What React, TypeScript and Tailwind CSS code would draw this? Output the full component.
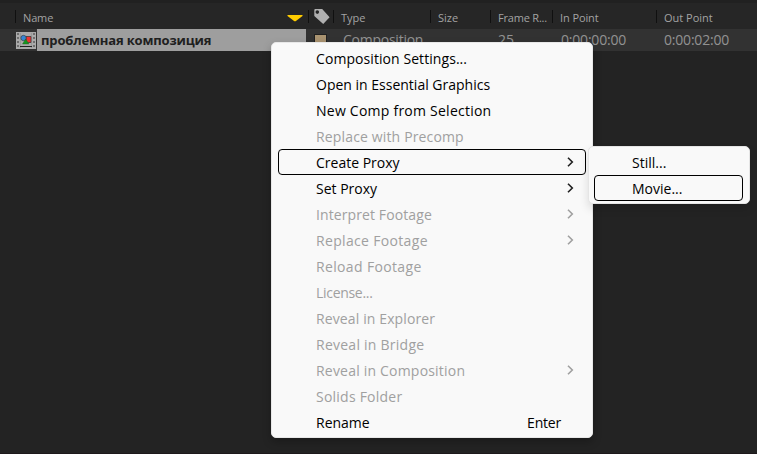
import React from "react";

type Item = { label: string; spacing?: string; disabled?: boolean; arrow?: boolean; active?: boolean; shortcut?: string };

const items: Item[] = [
  { label: "Composition Settings...", spacing: "tracking-[0.07px]" },
  { label: "Open in Essential Graphics" },
  { label: "New Comp from Selection", spacing: "tracking-[0.24px]" },
  { label: "Replace with Precomp", spacing: "tracking-[0.15px]", disabled: true },
  { label: "Create Proxy", arrow: true, active: true },
  { label: "Set Proxy", arrow: true },
  { label: "Interpret Footage", spacing: "tracking-[0.1px]", disabled: true, arrow: true },
  { label: "Replace Footage", spacing: "tracking-[0.33px]", disabled: true, arrow: true },
  { label: "Reload Footage", spacing: "tracking-[0.35px]", disabled: true },
  { label: "License...", spacing: "tracking-[-0.3px]", disabled: true },
  { label: "Reveal in Explorer", spacing: "tracking-[0.12px]", disabled: true },
  { label: "Reveal in Bridge", spacing: "tracking-[0.25px]", disabled: true },
  { label: "Reveal in Composition", spacing: "tracking-[0.2px]", disabled: true, arrow: true },
  { label: "Solids Folder", spacing: "tracking-[0.23px]", disabled: true },
  { label: "Rename", shortcut: "Enter" },
];

const columns = [
  { label: "Type", width: "w-[97px]" },
  { label: "Size", width: "w-[60px]" },
  { label: "Frame R...", width: "w-[62px]", spacing: "tracking-[-0.2px]" },
  { label: "In Point", width: "w-[104px]", spacing: "tracking-[-0.1px]" },
  { label: "Out Point", width: "w-[101px]" },
];

function MenuRow({ item }: { item: Item }) {
  return (
    <div
      className={`flex h-[26px] items-center rounded-[4px] border pl-[37px] pr-[11px] ${
        item.active ? "border-black" : "border-transparent"
      } ${item.disabled ? "text-[#a0a0a0]" : "text-black"}`}
    >
      <span className={`pt-[2px] ${item.spacing ?? ""}`}>{item.label}</span>
      {item.shortcut && <span className="ml-auto mr-[13px] pt-[2px] tracking-[-0.2px]">{item.shortcut}</span>}
      {item.arrow && (
        <svg className="ml-auto" width="7" height="10" viewBox="0 0 7 10" fill="none" stroke={item.disabled ? "#a0a0a0" : "#202020"} strokeWidth="1.6">
          <path d="M1 0.7 5.3 5 1 9.3" />
        </svg>
      )}
    </div>
  );
}

export default function App() {
  return (
    <div className="relative h-[454px] w-[757px] overflow-hidden border-b border-[#1d191b] bg-[#232323] font-['Open_Sans','Noto_Sans',sans-serif]">
      <div className="flex h-[29px] border-t-[3px] border-[#212121] bg-[#262626] pt-[7px] text-[11px] leading-[16px] text-[#a3a3a3]">
        <div className="ml-[15px] flex h-[13px] w-[293px] border-l border-[#101010] pl-[7px]">
          <span className="tracking-[-0.15px]">Name</span>
          <svg className="ml-auto mr-[5px] mt-[5px]" width="16" height="7" viewBox="0 0 16 7">
            <path d="M0.5 0H15.5V1L8.6 6.3H7.4L0.5 1Z" fill="#ffcc00" />
          </svg>
        </div>
        <div className="h-[13px] w-[25px] border-l border-[#101010] pl-[5px]">
          <svg className="-mt-[1px]" width="16" height="16" viewBox="0 0 16 16">
            <path fillRule="evenodd" d="M1.2 0H8.2L15.6 8.2 9.2 15 0.3 7V1.4Q0.3 0 1.2 0ZM3.3 1.3A1.8 1.8 0 1 0 3.3 4.9 1.8 1.8 0 1 0 3.3 1.3" fill="#b0b0b0" />
          </svg>
        </div>
        {columns.map((c) => (
          <div key={c.label} className={`h-[13px] shrink-0 whitespace-nowrap border-l border-[#101010] pl-[7px] ${c.width} ${c.spacing ?? ""}`}>
            {c.label}
          </div>
        ))}
      </div>

      <div className="flex h-[22px] items-center bg-[#323232] text-[14px] leading-[20px] text-[#929292]">
        <svg className="ml-4 shrink-0" width="20" height="17" viewBox="0 0 20 17">
          <path d="M0 0H20V17H0Z" fill="#aaa" />
          <path d="M4.5 1V16M15.5 1V16" stroke="#999" />
          <path d="M2 1V16M18 1V16" stroke="#333" strokeWidth="1" strokeDasharray="2 2" />
          <path d="M4 14.5H16" stroke="#222" />
          <path d="M10 4.5H15V10.5H10Z" fill="#ee3333" stroke="#333" strokeWidth=".7" />
          <circle cx="7.5" cy="6" r="2.7" fill="#3585d5" stroke="#333" strokeWidth=".6" />
          <path d="M9.7 7 13 12H6.5Z" fill="#179520" stroke="#245c22" strokeWidth=".4" />
        </svg>
        <div className="ml-px h-[22px] w-[269px] shrink-0 whitespace-nowrap bg-[#9e9e9e] pl-1 text-[13px] font-bold leading-[23px] tracking-[-0.16px] text-[#202020]">
          проблемная композиция
        </div>
        <div className="ml-[8px] h-[12px] w-[13px] shrink-0 border border-[#202020] bg-[#a99370]" />
        <span className="ml-[16px] w-[155px] shrink-0 tracking-[-0.25px]">Composition</span>
        <span className="w-[63px] shrink-0">25</span>
        <span className="w-[103px] shrink-0 tracking-[-0.2px]">0:00:00:00</span>
        <span className="tracking-[-0.2px]">0:00:02:00</span>
      </div>

      <div className="absolute left-[271px] top-[42px] h-[396px] w-[322px] rounded-[5px] border border-[#e8e8e8] bg-[#f9f9f9] px-[6px] py-[2px] text-[14px] leading-[20px] shadow-[0_4px_8px_rgba(0,0,0,0.25)]">
        {items.map((i) => (
          <MenuRow key={i.label} item={i} />
        ))}
      </div>
      <div className="absolute left-[588px] top-[146px] h-[58px] w-[162px] rounded-[5px] border border-[#e5e5e5] bg-[#f9f9f9] py-[2px] pl-[5px] pr-[6px] text-[14px] leading-[20px] shadow-[0_5px_10px_rgba(0,0,0,0.12)]">
        <MenuRow item={{ label: "Still..." }} />
        <MenuRow item={{ label: "Movie...", active: true }} />
      </div>
    </div>
  );
}
